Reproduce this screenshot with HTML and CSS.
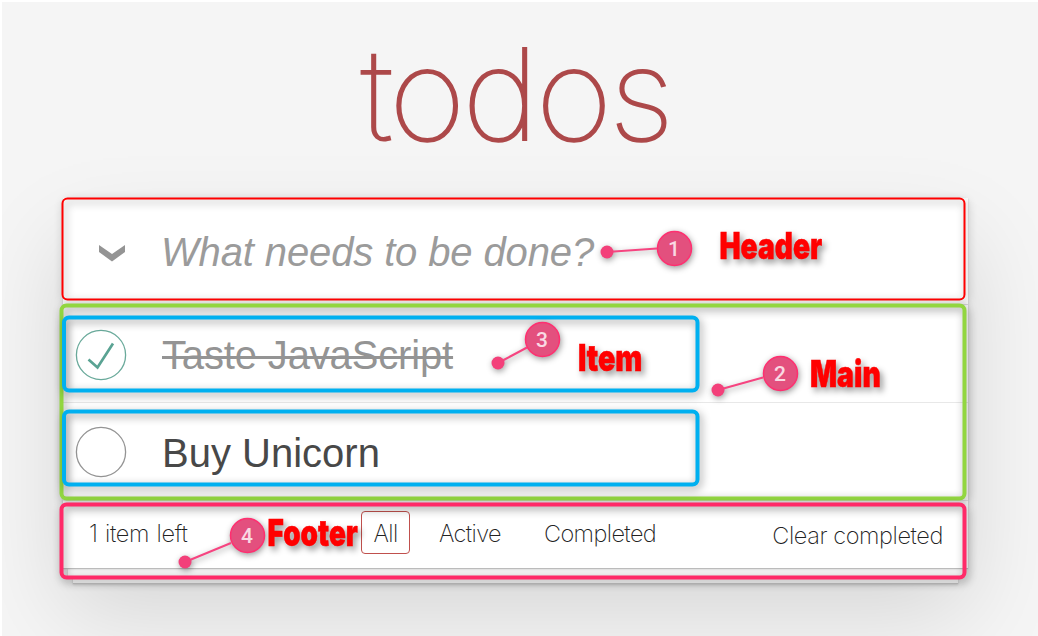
FILE: index.html
```html
<!DOCTYPE html>
<html lang="en">
<head>
<meta charset="utf-8">
<title>todos</title>
<link rel="stylesheet" href="styles.css">
</head>
<body>
<main class="page">
  <h1 class="title"><span>todos</span></h1>
  <div class="stack">
  <section class="app">
    <header class="entry">
      <svg class="chevron" width="26" height="17" viewBox="0 0 26 17"><path d="M0 0 L13 9 L26 0 V7 L13 16.500 L0 7Z" fill="#949494"/></svg>
      <span class="prompt">What needs to be done?</span>
    </header>
    <ul class="list">
      <li class="item done">
        <svg class="toggle" width="52" height="52" viewBox="0 0 52 52"><circle cx="26" cy="26" r="24.600" fill="#fff" stroke="#6aaa9b" stroke-width="1.300"/><path d="M13.500 30.500 L22.500 38.500 L38 14.500" fill="none" stroke="#5aa393" stroke-width="2.700"/></svg>
        <span>Taste JavaScript</span>
      </li>
      <li class="item">
        <svg class="toggle" width="52" height="52" viewBox="0 0 52 52"><circle cx="26" cy="26" r="24.600" fill="#fff" stroke="#949494" stroke-width="1.300"/></svg>
        <span>Buy Unicorn</span>
      </li>
    </ul>
    <footer class="status">
      <span class="count">1 item left</span>
      <nav class="filters"><a class="filter selected">All</a><a class="filter active">Active</a><a class="filter completed">Completed</a></nav>
      <span class="clear">Clear completed</span>
    </footer>
  </section>
  <div class="sheet second"></div>
  <div class="sheet third"></div>
  </div>
</main>
<svg class="notes" width="1038" height="636" viewBox="0 0 1038 636">
  <g class="frames">
    <rect class="frame" x="62.500" y="198.500" width="902" height="101" rx="5" stroke="#f00" stroke-width="2"/>
    <rect class="frame" x="61.500" y="305.500" width="903" height="193" rx="5" stroke="#92d640" stroke-width="4"/>
    <rect class="frame" x="64" y="317.500" width="633.500" height="73" rx="5" stroke="#00b0f0" stroke-width="4"/>
    <rect class="frame" x="64" y="411.500" width="633.500" height="73" rx="5" stroke="#00b0f0" stroke-width="4"/>
    <rect class="frame" x="61.500" y="504.500" width="903" height="73" rx="5" stroke="#ff2a68" stroke-width="4"/>
  </g>
  <g class="pin"><path d="M607 252 L657 248.500"/><circle class="dot" cx="607" cy="252" r="6.500"/><circle class="ball" cx="674.500" cy="248.500" r="17"/></g>
  <g class="pin"><path d="M718 390 L763 377.500"/><circle class="dot" cx="718" cy="390" r="6.500"/><circle class="ball" cx="780.500" cy="373.500" r="17"/></g>
  <g class="pin"><path d="M498 363 L527 347.500"/><circle class="dot" cx="498" cy="363" r="6.500"/><circle class="ball" cx="542.500" cy="339.500" r="17"/></g>
  <g class="pin"><path d="M185 562 L231 543"/><circle class="dot" cx="185" cy="562" r="6.500"/><circle class="ball" cx="247.500" cy="535.500" r="17"/></g>
  <g class="number"><text x="674" y="255.500">1</text><text x="780" y="380.500">2</text><text x="542" y="346.500">3</text><text x="247" y="542.500">4</text></g>
  <g class="label">
    <text transform="translate(719.500 259) scale(.65 1)" textLength="158" lengthAdjust="spacingAndGlyphs">Header</text>
    <text transform="translate(810 387) scale(.65 1)" textLength="109" lengthAdjust="spacingAndGlyphs">Main</text>
    <text transform="translate(578 371) scale(.65 1)" textLength="99" lengthAdjust="spacingAndGlyphs">Item</text>
    <text transform="translate(267.500 546) scale(.65 1)" textLength="139" lengthAdjust="spacingAndGlyphs">Footer</text>
  </g>
</svg>
</body>
</html>
```
FILE: styles.css
```css
* { box-sizing: border-box; }
body { margin: 0; width: 1038px; height: 636px; overflow: hidden; position: relative; background: #f5f5f5; font-family: "Liberation Sans", sans-serif; }
.page { height: 636px; border-top: 2px solid #fff; border-left: 2px solid #fff; padding-left: 61px; overflow: hidden; }
.title { margin: 0; height: 196px; padding-left: 298px; font: 100 126px/150px Inter, sans-serif; color: #ad494a; padding-top: 17px; -webkit-text-stroke: 2px #ad494a; }
.title span { display: inline-block; letter-spacing: -3px; transform: scaleX(1.047); transform-origin: left; }
.stack { width: 905px; height: 370px; box-shadow: 0 44px 88px rgba(0,0,0,.13); }
.app { position: relative; z-index: 2; width: 905px; height: 370px; background: #fff; box-shadow: 0 1px 1px #bbb, 0 2px 3px rgba(0,0,0,.08); display: flex; flex-direction: column; }
.entry { height: 107px; display: flex; align-items: center; padding-left: 36px; border-bottom: 1px solid #ddd; }
.chevron { margin-top: 4px; }
.prompt { margin-left: 36px; padding-top: 2px; font-size: 40px; font-style: italic; color: #9b9b9b; letter-spacing: -.13px; white-space: nowrap; }
.list { list-style: none; margin: 0; padding: 0; }
.item { height: 98px; padding: 1px 0 0 12px; display: flex; align-items: center; font-size: 40px; color: #484848; border-bottom: 1px solid #e8e8e8; }
.item span { margin-left: 35px; padding-top: 2px; white-space: nowrap; }
.done { color: #949494; }
.done span { text-decoration: line-through; text-decoration-thickness: 3px; letter-spacing: -.15px; }
.done .toggle { margin-top: 2px; }
.status { height: 67px; display: flex; align-items: flex-start; padding: 10px 25px 0 26px; font: 200 23.500px/46px Inter, sans-serif; color: #222; }
.status > *, .filter { white-space: nowrap; }
.count { width: 272px; letter-spacing: -.3px; word-spacing: 1px; }
.filters { display: flex; }
.filter { height: 43px; line-height: 46px; letter-spacing: -.6px; }
.selected { width: 49px; border: 1.500px solid #c0504d; border-radius: 4px; text-align: center; line-height: 43px; }
.active { margin-left: 29px; width: 62px; }
.completed { margin-left: 43px; }
.clear { margin-left: auto; padding-top: 2px; letter-spacing: -.4px; }
.sheet { position: relative; background: #f7f7f7; box-shadow: 0 1px 1px #c5c5c5, 0 2px 3px rgba(0,0,0,.12); }
.second { z-index: 1; height: 8px; width: 895px; margin-left: 5px; }
.third { height: 7px; width: 885px; margin-left: 10px; }
.notes { position: absolute; left: 0; top: 0; z-index: 3; }
.frame { fill: none; filter: drop-shadow(2px 3px 4px rgba(0,0,0,.4)); }
.pin { filter: drop-shadow(1px 2px 3px rgba(0,0,0,.4)); }
.pin path { stroke: #f64480; stroke-width: 2; }
.dot { fill: #f3407a; }
.ball { fill: #e3507e; stroke: #ff2f70; stroke-width: 1.500; }
.number { font: 500 21px Roboto, sans-serif; fill: #f9d9e3; text-anchor: middle; }
.label { font: 900 37px Inter, sans-serif; fill: #f00; stroke: #f00; stroke-width: .5; filter: drop-shadow(3px 4px 3px rgba(0,0,0,.4)); }
```
